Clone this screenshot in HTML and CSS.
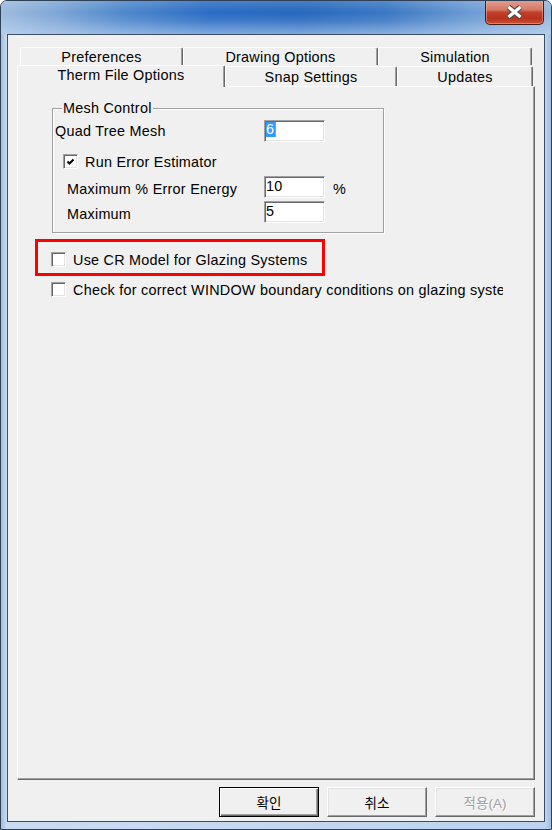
FILE: index.html
```html
<!DOCTYPE html>
<html lang="ko">
<head>
    <meta charset="UTF-8">
    <meta name="viewport" content="width=device-width, initial-scale=1.0">
    <title>Options</title>
    <link rel="stylesheet" href="styles.css">
</head>
<body>
    <div class="window">
        <div class="titlebar">
            <button class="close-btn" title="Close">
                <svg width="19" height="14" viewBox="0 0 19 14">
                    <path d="M3.5 2 L15.5 12 M15.5 2 L3.5 12" stroke="#4a4a4a" stroke-width="5.5"/>
                    <path d="M3.5 2 L15.5 12 M15.5 2 L3.5 12" stroke="#fff" stroke-width="3.2"/>
                </svg>
            </button>
        </div>

        <div class="client">
            <div class="tabs">
                <div class="tab-row back-row">
                    <div class="tab">Preferences</div>
                    <div class="tab">Drawing Options</div>
                    <div class="tab">Simulation</div>
                </div>
                <div class="tab-row front-row">
                    <div class="tab selected">Therm File Options</div>
                    <div class="tab">Snap Settings</div>
                    <div class="tab">Updates</div>
                </div>
            </div>

            <div class="panel">
                <div class="group">
                    <span class="legend">Mesh Control</span>

                    <div class="field-row">
                        <span class="field-label">Quad Tree Mesh</span>
                        <div class="edit"><span class="sel">6</span></div>
                    </div>

                    <div class="check-row estimator">
                        <span class="checkbox">
                            <svg width="13" height="13" viewBox="0 0 13 13">
                                <polyline points="3.5,6.5 5.5,8.5 9.5,4.5" fill="none" stroke="#000" stroke-width="2"/>
                            </svg>
                        </span>
                        <span>Run Error Estimator</span>
                    </div>

                    <div class="field-row indent energy">
                        <span class="field-label">Maximum % Error Energy</span>
                        <div class="edit">10</div>
                        <span class="unit">%</span>
                    </div>

                    <div class="field-row indent maximum">
                        <span class="field-label">Maximum</span>
                        <div class="edit">5</div>
                    </div>
                </div>

                <div class="highlight">
                    <div class="check-row">
                        <span class="checkbox"></span>
                        <span>Use CR Model for Glazing Systems</span>
                    </div>
                </div>

                <div class="check-row boundary">
                    <span class="checkbox"></span>
                    <span class="clip">Check for correct WINDOW boundary conditions on glazing systems</span>
                </div>
            </div>

            <div class="buttons">
                <button class="btn default">확인</button>
                <button class="btn">취소</button>
                <button class="btn" disabled>적용(A)</button>
            </div>
        </div>
    </div>
</body>
</html>
```

FILE: styles.css
```css
body {
    margin: 0;
    width: 552px;
    height: 830px;
    overflow: hidden;
    background: #fff;
    font-family: "Liberation Sans", Arial, "Noto Sans CJK KR", sans-serif;
    font-size: 14.4px;
    letter-spacing: 0.25px;
    color: #000;
}
.window {
    width: 552px;
    height: 830px;
    box-sizing: border-box;
    border: 1px solid #2f4157;
    border-radius: 7px 7px 0 0;
    display: flex;
    flex-direction: column;
    overflow: hidden;
    background:
        linear-gradient(to right, #9fbde0 0, #c8dbf1 1%, #c4d8ef 50%, #bcd3ee 99%, #9fbde0 100%);
}
.titlebar {
    height: 33px;
    flex: none;
    display: flex;
    justify-content: flex-end;
    align-items: flex-start;
    padding-right: 7px;
    background:
        linear-gradient(to bottom, rgba(255,255,255,0.15) 0, rgba(255,255,255,0) 35%, rgba(255,255,255,0.1) 60%, rgba(200,220,245,0.55) 100%),
        linear-gradient(to right, #9dbbdf 0, #7ea6d6 10%, #4f88cc 22%, #2a6cc4 38%, #2668bd 55%, #3a77c3 70%, #6a9ad3 85%, #97b8df 100%);
}
.close-btn {
    margin-top: -1px;
    width: 59px;
    height: 25px;
    padding: 0;
    border: 1px solid #4a1c16;
    border-top: none;
    border-radius: 0 0 5px 5px;
    display: flex;
    align-items: center;
    justify-content: center;
    box-shadow: inset 0 0 0 1px rgba(255,190,170,0.45);
    background: linear-gradient(to bottom, #e3a091 0, #d47a67 40%, #c0412b 52%, #b6321d 78%, #cf5236 100%);
}
.client {
    flex: 1;
    margin: 0 6px 7px;
    border: 1px solid #3d4d60;
    background: #f0f0f0;
    display: flex;
    flex-direction: column;
    padding: 12px 9px 4px;
}

/* tabs */
.tabs {
    flex: none;
}
.tab-row {
    display: grid;
}
.back-row {
    height: 18px;
    padding-left: 3px;
    grid-template-columns: 163px 195px 154px;
}
.front-row {
    height: 21px;
    grid-template-columns: 208px 172px 136px;
    align-items: start;
}
.tab {
    box-sizing: border-box;
    height: 20px;
    border: 1px solid;
    border-color: #fff #696969 transparent #fff;
    border-bottom: none;
    border-radius: 2px 2px 0 0;
    box-shadow: inset -1px 0 0 #a0a0a0;
    background: #f0f0f0;
    text-align: center;
    line-height: 20px;
}
.back-row .tab {
    height: 18px;
    line-height: 19px;
}
.front-row .tab {
    margin-top: 1px;
    line-height: 20px;
}
.front-row .tab.selected {
    margin-top: 0;
    height: 22px;
    line-height: 18px;
    position: relative;
    z-index: 1;
}

.panel {
    flex: 1;
    box-sizing: border-box;
    border: 1px solid;
    border-color: #fff #696969 #696969 #fff;
    box-shadow: inset -1px -1px 0 #a0a0a0;
}

/* group box */
.group {
    position: relative;
    box-sizing: border-box;
    width: 332px;
    height: 125px;
    margin: 21px 0 0 34px;
    padding-top: 11px;
    border: 1px solid #a0a0a0;
    box-shadow: inset 1px 1px 0 #fff, 1px 1px 0 #fff;
}
.legend {
    position: absolute;
    left: 9px;
    top: -9px;
    padding: 0 1px;
    background: #f0f0f0;
    line-height: 17px;
}
.field-row {
    display: grid;
    grid-template-columns: 211px 61px auto;
    align-items: center;
    height: 22px;
}
.field-row .field-label {
    padding-left: 2px;
}
.field-row.indent .field-label {
    padding-left: 14px;
    padding-top: 3px;
}
.field-row.energy {
    margin-top: 7px;
}
.field-row.maximum {
    margin-top: 3px;
}
.edit {
    box-sizing: border-box;
    width: 61px;
    height: 22px;
    border: 1px solid;
    border-color: #a0a0a0 #fff #fff #a0a0a0;
    box-shadow: inset 1px 1px 0 #696969, inset -1px -1px 0 #e3e3e3;
    background: #fff;
    padding-left: 1px;
    line-height: 19px;
}
.sel {
    display: inline-block;
    height: 15px;
    margin-top: 1px;
    padding: 0 1px 0 0;
    line-height: 15px;
    vertical-align: top;
    background: #3399ff;
    color: #fff;
    border-right: 1px solid #e8892a;
}
.unit {
    padding-left: 8px;
    padding-top: 3px;
}

/* checkboxes */
.check-row {
    display: flex;
    align-items: center;
    gap: 7px;
    height: 15px;
}
.checkbox {
    flex: none;
    width: 13px;
    height: 13px;
    border: 1px solid;
    border-color: #a0a0a0 #fff #fff #a0a0a0;
    box-shadow: inset 1px 1px 0 #696969, inset -1px -1px 0 #e3e3e3;
    background: #fff;
    display: flex;
}
.check-row.estimator {
    margin: 12px 0 0 10px;
}
.highlight {
    box-sizing: border-box;
    width: 290px;
    height: 37px;
    margin: 6px 0 0 17px;
    padding: 10px 0 0 13px;
    border: 3px solid #ff0000;
}
.check-row.boundary {
    margin: 6px 0 0 33px;
    width: 452px;
}
.clip {
    overflow: hidden;
    white-space: nowrap;
    min-width: 0;
}

/* dialog buttons */
.buttons {
    flex: none;
    display: flex;
    justify-content: flex-end;
    gap: 8px;
    margin-top: 7px;
}
.btn {
    box-sizing: border-box;
    width: 100px;
    height: 30px;
    padding: 0;
    font-family: "Liberation Sans", "Noto Sans CJK KR", sans-serif;
    font-size: 13.5px;
    color: #000;
    background: #f0f0f0;
    border: 1px solid;
    border-color: #fff #696969 #696969 #fff;
    box-shadow: inset -1px -1px 0 #a0a0a0, inset 1px 1px 0 #e3e3e3;
}
.btn.default {
    border-color: #000;
    box-shadow: inset 1px 1px 0 #fff, inset -1px -1px 0 #696969, inset -2px -2px 0 #a0a0a0;
}
.btn:disabled {
    color: #a0a0a0;
    text-shadow: 1px 1px 0 #fff;
}
```
